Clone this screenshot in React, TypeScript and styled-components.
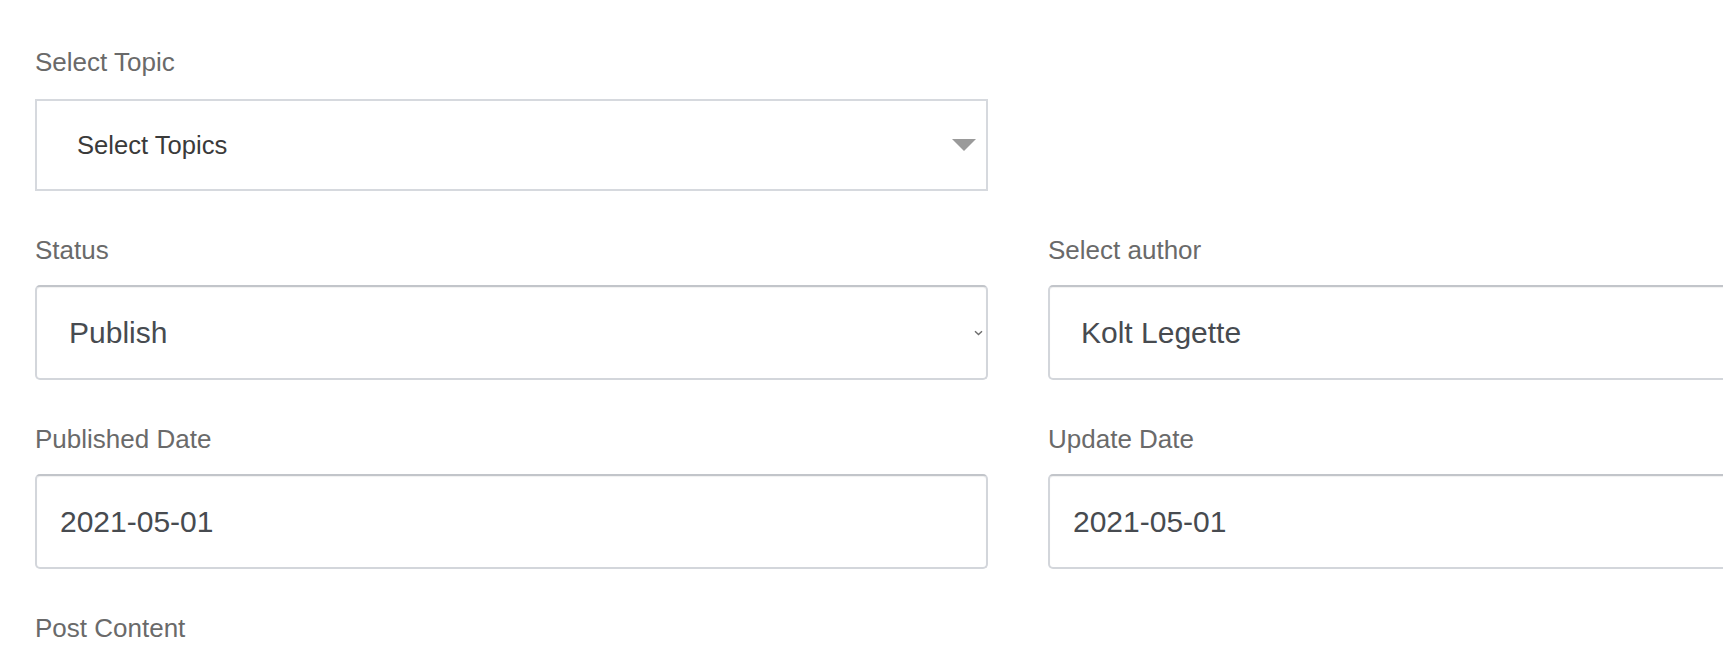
import React from "react";
import styled, { createGlobalStyle } from "styled-components";

const GlobalStyle = createGlobalStyle`
  body {
    margin: 0;
    background: #fff;
    font-family: "Liberation Sans", Arial, sans-serif;
    overflow: hidden;
  }
`;

const Page = styled.div`
  padding: 43px 0 0 35px;
`;

const Form = styled.form`
  display: grid;
  grid-template-columns: 953px 953px;
  column-gap: 60px;
  row-gap: 40px;
`;

const Group = styled.div<{ $full?: boolean }>`
  grid-column: ${(p) => (p.$full ? "1 / span 2" : "auto")};
`;

const Label = styled.label<{ $space?: number }>`
  display: block;
  font-size: 26px;
  line-height: 38px;
  color: #6a6a6a;
  margin-bottom: ${(p) => p.$space ?? 16}px;
`;

const TopicBox = styled.div`
  box-sizing: border-box;
  height: 92px;
  border: 2px solid #d6d9de;
  display: flex;
  align-items: center;
  justify-content: space-between;
  padding: 0 10px 0 40px;
  font-size: 25.6px;
  color: #3a3a3a;
`;

const Field = styled.div<{ $pad: number; $size?: number }>`
  box-sizing: border-box;
  height: 95px;
  border: 2px solid #d3d6db;
  border-top-color: #c2c5ca;
  border-radius: 5px;
  box-shadow: inset 0 1px 1px rgba(0, 0, 0, 0.06);
  display: flex;
  align-items: center;
  justify-content: space-between;
  padding: 0 3px 0 ${(p) => p.$pad}px;
  font-size: ${(p) => p.$size ?? 30}px;
  color: #474b50;
  white-space: nowrap;
`;

const Caret = () => (
  <svg width="24" height="12" viewBox="0 0 24 12">
    <polygon points="0,0 24,0 12,12" fill="#9a9a9a" />
  </svg>
);

const Chevron = () => (
  <svg width="9" height="6" viewBox="0 0 9 6">
    <path d="M1 1.2 L4.5 4.6 L8 1.2" fill="none" stroke="#6d6d6d" strokeWidth="1.4" />
  </svg>
);

export default function App() {
  return (
    <Page>
      <GlobalStyle />
      <Form>
        <Group>
          <Label $space={18}>Select Topic</Label>
          <TopicBox>
            <span>Select Topics</span>
            <Caret />
          </TopicBox>
        </Group>
        <Group />
        <Group>
          <Label>Status</Label>
          <Field $pad={32}>
            <span>Publish</span>
            <Chevron />
          </Field>
        </Group>
        <Group>
          <Label>Select author</Label>
          <Field $pad={31}>
            <span>Kolt Legette</span>
          </Field>
        </Group>
        <Group>
          <Label>Published Date</Label>
          <Field $pad={23}>2021-05-01</Field>
        </Group>
        <Group>
          <Label>Update Date</Label>
          <Field $pad={23}>2021-05-01</Field>
        </Group>
        <Group $full>
          <Label>Post Content</Label>
        </Group>
      </Form>
    </Page>
  );
}
